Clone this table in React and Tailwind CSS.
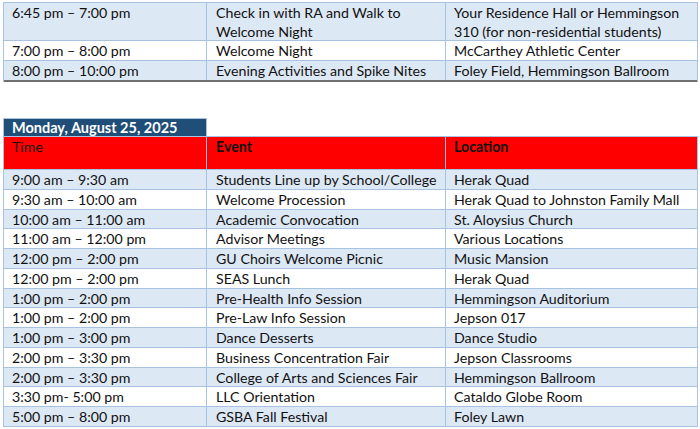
import React from "react";

const top = [
  ["6:45 pm – 7:00 pm", "Check in with RA and Walk to Welcome Night", "Your Residence Hall or Hemmingson 310 (for non-residential students)"],
  ["7:00 pm – 8:00 pm", "Welcome Night", "McCarthey Athletic Center"],
  ["8:00 pm – 10:00 pm", "Evening Activities and Spike Nites", "Foley Field, Hemmingson Ballroom"],
];

const rows = [
  ["9:00 am – 9:30 am", "Students Line up by School/College", "Herak Quad"],
  ["9:30 am – 10:00 am", "Welcome Procession", "Herak Quad to Johnston Family Mall"],
  ["10:00 am – 11:00 am", "Academic Convocation", "St. Aloysius Church"],
  ["11:00 am – 12:00 pm", "Advisor Meetings", "Various Locations"],
  ["12:00 pm – 2:00 pm", "GU Choirs Welcome Picnic", "Music Mansion"],
  ["12:00 pm – 2:00 pm", "SEAS Lunch", "Herak Quad"],
  ["1:00 pm – 2:00 pm", "Pre-Health Info Session", "Hemmingson Auditorium"],
  ["1:00 pm – 2:00 pm", "Pre-Law Info Session", "Jepson 017"],
  ["1:00 pm – 3:00 pm", "Dance Desserts", "Dance Studio"],
  ["2:00 pm – 3:30 pm", "Business Concentration Fair", "Jepson Classrooms"],
  ["2:00 pm – 3:30 pm", "College of Arts and Sciences Fair", "Hemmingson Ballroom"],
  ["3:30 pm- 5:00 pm", "LLC Orientation", "Cataldo Globe Room"],
  ["5:00 pm – 8:00 pm", "GSBA Fall Festival", "Foley Lawn"],
];

function Cells({ r, bold = [false, false, false] }) {
  return (
    <>
      <div className={"pl-[8px] border-r border-[#a8c3e2] leading-[19px]" + (bold[0] ? " font-bold" : "")}>{r[0]}</div>
      <div className={"pl-[9px] border-r border-[#a8c3e2] leading-[19px]" + (bold[1] ? " font-bold" : "")}>{r[1]}</div>
      <div className={"pl-[8px] leading-[19px]" + (bold[2] ? " font-bold" : "")}>{r[2]}</div>
    </>
  );
}

export default function App() {
  return (
    <div className="w-[700px] h-[429px] bg-white overflow-hidden text-[14.2px] text-[#111] font-['Lato',sans-serif]">
      <div className="ml-[3px] mt-[2px] w-[695px] border-l border-t border-r border-[#a8c3e2]">
        <div className="grid grid-cols-[203px_239px_252px] h-[38px] bg-[#dde8f5] border-b border-[#a8c3e2]">
          <Cells r={top[0]} />
        </div>
        <div className="grid grid-cols-[203px_239px_252px] h-[20px] bg-white border-b border-[#a8c3e2]">
          <Cells r={top[1]} />
        </div>
        <div className="grid grid-cols-[203px_239px_252px] h-[21px] bg-[#dde8f5] border-b-2 border-b-[#707070]">
          <Cells r={top[2]} />
        </div>
      </div>

      <div className="ml-[3px] mt-[36px] w-[695px]">
        <div className="w-[204px] h-[18px] bg-[#1f4e79] border border-b-0 border-[#a8c3e2] text-white font-bold text-[14.5px] pl-[8px] leading-[17px]">
          Monday, August 25, 2025
        </div>
        <div className="border-l border-r border-t border-[#a8c3e2]">
          <div className="grid grid-cols-[203px_239px_252px] h-[33px] bg-[#ff0000] border-b border-[#a8c3e2]">
            <Cells r={["Time", "Event", "Location"]} bold={[false, true, true]} />
          </div>
          {rows.map((r, i) => (
            <div
              key={i}
              className={
                "grid grid-cols-[203px_239px_252px] h-[19.75px] border-b border-[#a8c3e2] " +
                (i % 2 === 0 ? "bg-[#dde8f5]" : "bg-white")
              }
            >
              <Cells r={r} />
            </div>
          ))}
        </div>
      </div>
    </div>
  );
}
